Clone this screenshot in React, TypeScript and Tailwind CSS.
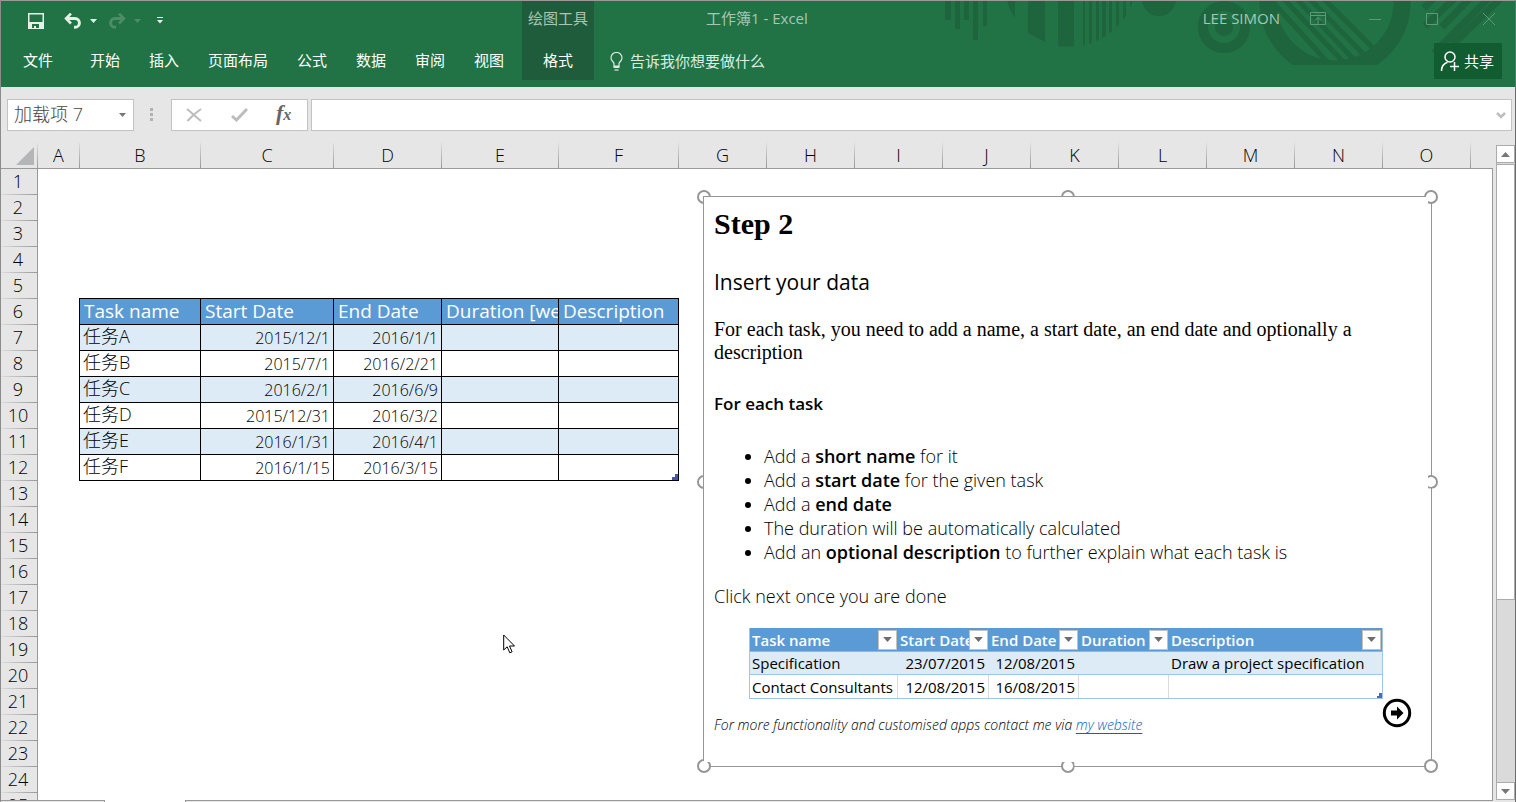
import type { ReactNode } from 'react';

const ui = "font-['Open_Sans','Noto_Sans_CJK_SC',sans-serif]";

const tabs = ['开始', '插入', '页面布局', '公式', '数据', '审阅', '视图'];

const columns = [
  { name: 'A', width: 'w-[42px]' },
  { name: 'B', width: 'w-[121px]' },
  { name: 'C', width: 'w-[133px]' },
  { name: 'D', width: 'w-[108px]' },
  { name: 'E', width: 'w-[117px]' },
  { name: 'F', width: 'w-[120px]' },
  ...['G', 'H', 'I', 'J', 'K', 'L', 'M', 'N', 'O'].map((name) => ({ name, width: 'w-[88px]' })),
];

const rowNumbers = Array.from({ length: 25 }, (_, i) => i + 1);

const tasks = [
  ['任务A', '2015/12/1', '2016/1/1'],
  ['任务B', '2015/7/1', '2016/2/21'],
  ['任务C', '2016/2/1', '2016/6/9'],
  ['任务D', '2015/12/31', '2016/3/2'],
  ['任务E', '2016/1/31', '2016/4/1'],
  ['任务F', '2016/1/15', '2016/3/15'],
];

function HeaderArt() {
  return (
    <svg className="pointer-events-none absolute top-0 right-0" width="575" height="86" viewBox="940 1 575 86" fill="#1e643c" aria-hidden="true">
      <path d="M945 0h6v20h-6zM955 0h5v29h-5zM964 0h5v20h-5zM973 0h5v40h-5zM983 0h4v26h-4z" />
      <path d="M1007 0h8v18q-6-8-8-18zM1028 0h17v42l-17-9zM1058 0h16v46q-8 1-16 0z" />
      <path d="M1083 0h2v45l-2 1zM1089 0h3v43l-3 1zM1096 0h3v40l-3 1zM1102 0h4v36l-4 2zM1109 0h3v31l-3 2zM1116 0h3v25l-3 2zM1123 0h3v17l-3 2zM1130 0h3l-3 8z" />
      <circle cx="1159" cy="-1" r="17" />
      <circle cx="1224" cy="27" r="21" fill="none" stroke="#1e643c" strokeWidth="10" />
      <circle cx="1224" cy="27" r="9" />
      <clipPath id="ringClip"><path d="M1255 0h165v65h-165z" /></clipPath>
      <clipPath id="innerClip"><circle cx="1335" cy="2" r="59" /></clipPath>
      <g clipPath="url(#ringClip)">
        <circle cx="1335" cy="2" r="67" fill="none" stroke="#1e643c" strokeWidth="17" />
        <g clipPath="url(#innerClip)" stroke="#1e643c" strokeWidth="5">
          <path d="M1271 0l60 66M1283-2l64 68M1296-2l62 66M1308-3l60 62M1321-4l58 58" />
        </g>
      </g>
      <g stroke="#1e643c" strokeWidth="7">
        <path d="M1424 8l10-10M1425 26l30-28M1442 27l28-29M1434 53l60-60M1453 44l54-52" />
      </g>
    </svg>
  );
}

function Caret({ className }: { className: string }) {
  return (
    <svg className={className} width="7" height="4" viewBox="0 0 7 4" fill="currentColor" aria-hidden="true">
      <path d="M0 0h7L3.5 4z" />
    </svg>
  );
}

function QuickAccess() {
  return (
    <div className="flex h-[39px] items-center pl-[27px] text-[#e8efe9]">
      <button aria-label="保存">
        <svg width="16" height="16" viewBox="0 0 16 16">
          <path fill="currentColor" fillRule="evenodd" d="M0 0h16v16H0zM1.500 1.500v7.500h13V1.500zM4 11v4h2v-2h2v2h3v-4z" />
        </svg>
      </button>
      <button aria-label="撤消" className="ml-5">
        <svg width="18" height="16" viewBox="0 0 18 16" fill="none" stroke="currentColor" strokeWidth="3">
          <path d="M7 .5L2 5.500L7 10.500" strokeWidth="2.500" />
          <path d="M2.500 5.500H11a4.300 4.300 0 0 1 0 8.800H10" />
        </svg>
      </button>
      <button aria-label="撤消选项" className="ml-2"><Caret className="" /></button>
      <button aria-label="恢复" className="ml-[11px] text-[#4b8d67]">
        <svg width="18" height="16" viewBox="0 0 18 16" fill="none" stroke="currentColor" strokeWidth="3">
          <path d="M11 .5L16 5.500L11 10.500" strokeWidth="2.500" />
          <path d="M15.500 5.500H7a4.300 4.300 0 0 0 0 8.800H8" />
        </svg>
      </button>
      <button aria-label="恢复选项" className="ml-2 text-[#4b8d67]"><Caret className="" /></button>
      <button aria-label="自定义快速访问工具栏" className="ml-4">
        <svg width="6" height="7" viewBox="0 0 6 7" fill="currentColor">
          <path d="M0 0h6v1H0zM0 3h6L3 6.500z" />
        </svg>
      </button>
    </div>
  );
}

function Header() {
  return (
    <header className="relative flex h-[86px] bg-[#217346] text-[15px] text-white">
      <HeaderArt />
      <div className="relative w-[521px]">
        <QuickAccess />
        <nav className="flex h-10 items-center pl-[22px] leading-5">
          <button>文件</button>
          <div className="ml-[37px] flex gap-[29px]">
            {tabs.map((t) => <button key={t}>{t}</button>)}
          </div>
        </nav>
      </div>
      <div className="relative h-[79px] w-[72px] bg-[#1e5c3b] text-center">
        <div className="flex h-[35px] items-center justify-center text-[#a9c6b3]">绘图工具</div>
        <button className="flex h-12 w-full items-center justify-center">格式</button>
      </div>
      <div className="relative flex min-w-0 flex-1 flex-col">
        <div className="flex h-[35px] items-center text-[#a9c6b3]">
          <div className="ml-28">工作簿1 - Excel</div>
          <div className="ml-auto">LEE SIMON</div>
          <div className="ml-[30px] flex items-center text-[#5f9a78]">
            <button aria-label="功能区显示选项">
              <svg width="16" height="13" viewBox="0 0 16 13" fill="none" stroke="currentColor">
                <path d="M.5.5h15v12H.5zM.5 3.500h15M8 12V5.500M5 8.500l3-3 3 3" />
              </svg>
            </button>
            <button aria-label="最小化" className="ml-[43px]">
              <svg width="12" height="12" viewBox="0 0 12 12" stroke="currentColor"><path d="M0 6.500h12" /></svg>
            </button>
            <button aria-label="最大化" className="ml-[45px]">
              <svg width="12" height="12" viewBox="0 0 12 12" fill="none" stroke="currentColor"><path d="M.5.5h11v11H.5z" /></svg>
            </button>
            <button aria-label="关闭" className="mr-5 ml-[45px]">
              <svg width="12" height="12" viewBox="0 0 12 12" stroke="currentColor"><path d="M0 0l12 12M12 0L0 12" /></svg>
            </button>
          </div>
        </div>
        <div className="mt-[7px] flex h-9 items-center justify-between pr-[13px] pl-4">
          <button className="flex items-center gap-[7px] text-[#dcebe1]">
            <svg width="13" height="19" viewBox="0 0 13 19" fill="none" stroke="currentColor" strokeWidth="1.200">
              <path d="M4 14v-2.500C3.500 9.500 1 9 1 5.800a5.500 5.300 0 0 1 11 0C12 9 9.500 9.500 9 11.500V14z" />
              <path d="M3.500 14h6v2h-6z" fill="currentColor" stroke="none" />
              <path d="M4.500 18h4" />
            </svg>
            告诉我你想要做什么
          </button>
          <button className="flex h-9 w-[68px] items-center gap-1 bg-[#115c31] pl-1.5">
            <svg width="20" height="20" viewBox="0 0 20 20" fill="none" stroke="currentColor" strokeWidth="1.500">
              <circle cx="10" cy="6" r="5" />
              <path d="M1.500 20c0-5 2.500-7.500 6-8.700M10 15.500h9M14.500 11v9" />
            </svg>
            共享
          </button>
        </div>
      </div>
    </header>
  );
}

function FormulaBar() {
  return (
    <div className="flex h-14 items-start bg-[#e6e6e6] pt-3 pr-[3px] pl-1.5">
      <div className="flex h-8 w-[127px] items-center border border-[#c3c3c3] bg-white pr-[7px] text-[#444]">
        <input aria-label="名称框" defaultValue="加载项 7" className="h-full w-full min-w-0 pb-1 pl-1.5 text-lg font-light outline-none" />
        <Caret className="shrink-0 text-[#777]" />
      </div>
      <div className="mt-[9px] ml-4 flex w-[3px] flex-col gap-0.5 text-[#b1b1b1]">
        <span className="size-[3px] bg-current" />
        <span className="size-[3px] bg-current" />
        <span className="size-[3px] bg-current" />
      </div>
      <div className="ml-[18px] flex h-8 w-[137px] items-center border border-[#c3c3c3] bg-white pl-3.5">
        <button aria-label="取消">
          <svg width="16" height="14" viewBox="0 0 16 14" fill="none" stroke="#bcbcbc" strokeWidth="2"><path d="M1 1c5 4 9 8 14 12M15 1C9 5 5 9 1.500 13" /></svg>
        </button>
        <button aria-label="输入" className="ml-[29px]">
          <svg width="17" height="14" viewBox="0 0 17 14" fill="none" stroke="#bcbcbc" strokeWidth="3"><path d="M1 8l4.500 4L16 1" /></svg>
        </button>
        <button aria-label="插入函数" className="ml-7 font-['Liberation_Serif',serif] text-[22px] leading-5 font-bold text-[#666] italic">
          f<span className="text-base">x</span>
        </button>
      </div>
      <div className="ml-[3px] flex h-8 min-w-0 flex-1 items-center border border-[#c3c3c3] bg-white pr-[5px]">
        <input aria-label="编辑栏" className="h-full min-w-0 flex-1 px-2 outline-none" />
        <svg width="10" height="7" viewBox="0 0 10 7" fill="none" stroke="#bdbdbd" strokeWidth="2.500" aria-hidden="true"><path d="M1 1l4 4 4-4" /></svg>
      </div>
    </div>
  );
}

function ColumnHeaders() {
  return (
    <div className="flex h-[26px] overflow-hidden border-b border-[#999] bg-[#e6e6e6] text-lg leading-6 font-light">
      <div className="flex w-[37px] shrink-0">
        <svg className="mt-1 ml-[15px]" width="18" height="18" viewBox="0 0 18 18" aria-hidden="true"><path d="M18 0v18H0z" fill="#b3b5b7" /></svg>
        <span className="ml-auto w-px bg-linear-to-b from-[#dcdcdc] to-[#999]" />
      </div>
      {columns.map((c) => (
        <div key={c.name} className={`flex shrink-0 ${c.width}`}>
          <span className="flex-1 text-center">{c.name}</span>
          <span className="w-px bg-linear-to-b from-[#dcdcdc] to-[#999]" />
        </div>
      ))}
    </div>
  );
}

function TaskTable() {
  const cell = 'h-[26px] overflow-hidden border-r border-b border-black p-0 whitespace-nowrap';
  return (
    <div className="relative w-[600px]">
      <table className="w-full table-fixed border-separate border-spacing-0 border-t border-l border-black leading-6">
        <colgroup>
          <col className="w-[121px]" /><col className="w-[133px]" /><col className="w-[108px]" /><col className="w-[117px]" /><col className="w-[120px]" />
        </colgroup>
        <thead>
          <tr className="bg-[#5b9bd5] text-left text-[19px] text-white">
            {['Task name', 'Start Date', 'End Date', 'Duration [weeks]', 'Description'].map((h) => (
              <th key={h} className={`${cell} pl-1 font-normal`}><div className="h-[25px] overflow-hidden">{h}</div></th>
            ))}
          </tr>
        </thead>
        <tbody>
          {tasks.map(([name, start, end]) => (
            <tr key={name} className="text-right text-base font-light odd:bg-[#ddebf7]">
              <td className={`${cell} pl-[3px] text-left text-lg leading-[22px]`}><div className="h-[25px] overflow-hidden">{name}</div></td>
              <td className={`${cell} pr-[3px]`}>{start}</td>
              <td className={`${cell} pr-[3px]`}>{end}</td>
              <td className={cell} />
              <td className={cell} />
            </tr>
          ))}
        </tbody>
      </table>
      <svg className="absolute right-px bottom-px" width="6" height="6" viewBox="0 0 6 6" aria-hidden="true"><path d="M6 0v6H0V3h3V0z" fill="#4556ab" /></svg>
    </div>
  );
}

function Handle({ className }: { className: string }) {
  return <span className={`absolute size-3.5 rounded-full border-2 border-[#969696] bg-white ${className}`} />;
}

function FilterHead({ children }: { children: ReactNode }) {
  return (
    <th className="h-6 border-b border-[#8fb8e0] p-0 font-semibold">
      <div className="flex items-center pr-px pl-0.5">
        <span className="min-w-0 flex-1 overflow-hidden whitespace-nowrap">{children}</span>
        <button aria-label="筛选" className="flex h-5 w-[19px] shrink-0 items-center justify-center border border-[#c6c2b8] bg-white text-[#6d6d6d]">
          <Caret className="h-[5px] w-[9px]" />
        </button>
      </div>
    </th>
  );
}

function SampleTable() {
  const line = 'border-r border-[#dadada]';
  return (
    <div className="relative ml-[35px] w-[634px]">
      <table className="w-full table-fixed border-separate border-spacing-0 border border-t-0 border-[#9fc5e8] text-[15px] leading-[22px] font-normal">
        <colgroup>
          <col className="w-[148px]" /><col className="w-[91px]" /><col className="w-[90px]" /><col className="w-[90px]" /><col />
        </colgroup>
        <thead>
          <tr className="bg-[#5b9bd5] text-left text-white">
            <FilterHead>Task name</FilterHead>
            <FilterHead>Start Date</FilterHead>
            <FilterHead>End Date</FilterHead>
            <FilterHead>Duration</FilterHead>
            <FilterHead>Description</FilterHead>
          </tr>
        </thead>
        <tbody className="text-right whitespace-nowrap">
          <tr className="bg-[#ddebf7]">
            <td className="h-[23px] border-b border-[#9fc5e8] pl-0.5 text-left">Specification</td>
            <td className="border-b border-[#9fc5e8] pr-1">23/07/2015</td>
            <td className="border-b border-[#9fc5e8] pr-1">12/08/2015</td>
            <td className="border-b border-[#9fc5e8]" />
            <td className="border-b border-[#9fc5e8] pl-0.5 text-left">Draw a project specification</td>
          </tr>
          <tr>
            <td className={`h-[23px] pl-0.5 text-left ${line}`}>Contact Consultants</td>
            <td className={`pr-[3px] ${line}`}>12/08/2015</td>
            <td className={`pr-[3px] ${line}`}>16/08/2015</td>
            <td className={line} />
            <td />
          </tr>
        </tbody>
      </table>
      <svg className="absolute right-px bottom-px" width="5" height="5" viewBox="0 0 5 5" aria-hidden="true"><path d="M5 0v5H0V3h2V0z" fill="#4a6cb8" /></svg>
    </div>
  );
}

function StepPane() {
  return (
    <section className="absolute top-[27px] left-[665px] h-[571px] w-[729px]">
      <Handle className="-top-1.5 -left-1.5" />
      <Handle className="-top-1.5 left-1/2 -translate-x-1/2" />
      <Handle className="top-1/2 -left-1.5 -translate-y-1/2" />
      <div className="relative h-full border border-[#969696] bg-white pt-[9px] pl-2.5 text-lg leading-6 font-light text-black">
        <h1 className="font-['Liberation_Serif',serif] text-[30px] leading-9 font-bold">Step 2</h1>
        <h2 className="mt-7 text-[21px] leading-6 font-medium">Insert your data</h2>
        <p className="mt-6 w-[680px] font-['Liberation_Serif',serif] text-xl leading-[23px] font-normal">
          For each task, you need to add a name, a start date, an end date and optionally a description
        </p>
        <h3 className="mt-7 text-[17px] font-semibold">For each task</h3>
        <ul className="mt-7 list-disc pl-[50px] leading-6 marker:text-black">
          <li>Add a <b className="font-semibold">short name</b> for it</li>
          <li>Add a <b className="font-semibold">start date</b> for the given task</li>
          <li>Add a <b className="font-semibold">end date</b></li>
          <li>The duration will be automatically calculated</li>
          <li>Add an <b className="font-semibold">optional description</b> to further explain what each task is</li>
        </ul>
        <p className="my-5">Click next once you are done</p>
        <SampleTable />
        <p className="mt-3.5 text-sm leading-6 italic">
          For more functionality and customised apps contact me via <a href="#website" className="text-[#0563c1] underline underline-offset-3">my website</a>
        </p>
        <button aria-label="Next" className="absolute right-[19px] bottom-[38px]">
          <svg width="30" height="30" viewBox="0 0 30 30">
            <circle cx="15" cy="15" r="12.700" fill="#fff" stroke="#000" strokeWidth="3" />
            <path d="M9 12.500h6V8.500l6.500 6.500-6.500 6.500v-4H9z" />
          </svg>
        </button>
      </div>
      <Handle className="-top-1.5 -right-1.5 [clip-path:polygon(0_0,100%_0,100%_100%,4px_100%,4px_7px,0_7px)]" />
      <Handle className="top-1/2 -right-1.5 -translate-y-1/2 [clip-path:inset(0_0_0_4px)]" />
      <Handle className="-bottom-1.5 -left-1.5 [clip-path:polygon(0_0,7px_0,7px_3px,100%_3px,100%_100%,0_100%)]" />
      <Handle className="-bottom-1.5 left-1/2 -translate-x-1/2 [clip-path:inset(3px_0_0_0)]" />
      <Handle className="-right-1.5 -bottom-1.5" />
    </section>
  );
}

function Sheet() {
  return (
    <div className="flex min-h-0 flex-1 overflow-hidden">
      <div className="w-[37px] shrink-0 border-r border-[#999] bg-[#e6e6e6] text-center text-lg leading-[25px] font-light">
        {rowNumbers.map((n) => (
          <div key={n} className="flex h-[26px] flex-col">
            <span className="h-[25px] pr-0.5">{n}</span>
            <span className="h-px bg-linear-to-r from-[#dcdcdc] to-[#999]" />
          </div>
        ))}
      </div>
      <div className="relative min-w-0 flex-1 bg-white pt-[129px] pl-[41px]">
        <TaskTable />
        <StepPane />
        <svg className="absolute top-[465px] left-[465px]" width="13" height="20" viewBox="0 0 13 20" aria-hidden="true">
          <path d="M.7 1v15l3.500-3.200 2.600 6 2.300-1-2.600-5.800h5z" fill="#fff" stroke="#000" />
        </svg>
      </div>
    </div>
  );
}

function ScrollBar() {
  return (
    <div className="mt-[2px] flex w-[19px] flex-col border-l border-[#ababab] bg-[#dadada]">
      <button aria-label="向上滚动" className="flex h-[18px] items-center justify-center border border-l-0 border-[#ababab] bg-white text-[#777]">
        <svg width="9" height="5" viewBox="0 0 9 5" fill="currentColor"><path d="M0 5h9L4.500 0z" /></svg>
      </button>
      <div className="mt-px h-[436px] border border-l-0 border-[#ababab] bg-white" />
      <button aria-label="向下滚动" className="mt-auto flex h-[18px] items-center justify-center border border-l-0 border-[#ababab] bg-white text-[#777]">
        <svg width="9" height="5" viewBox="0 0 9 5" fill="currentColor"><path d="M0 0h9L4.500 5z" /></svg>
      </button>
    </div>
  );
}

export default function App() {
  return (
    <div className={`flex h-screen flex-col overflow-hidden border-t border-r border-l border-t-[#9a9a9a] border-r-[#6b6b6b] border-l-[#8c8c8c] bg-[#e6e6e6] text-black ${ui}`}>
      <Header />
      <FormulaBar />
      <main className="flex min-h-0 flex-1">
        <div className="flex min-w-0 flex-1 flex-col">
          <ColumnHeaders />
          <div className="flex min-h-0 flex-1 flex-col border-r border-[#999]">
            <Sheet />
          </div>
        </div>
        <div className="flex w-[22px] justify-end">
          <ScrollBar />
        </div>
      </main>
      <footer className="flex h-0.5 pr-[22px]">
        <div className="w-[104px] border-t border-r border-[#999]" />
        <div className="w-20 bg-white" />
        <div className="flex-1 border-t border-l border-[#999]" />
      </footer>
    </div>
  );
}
